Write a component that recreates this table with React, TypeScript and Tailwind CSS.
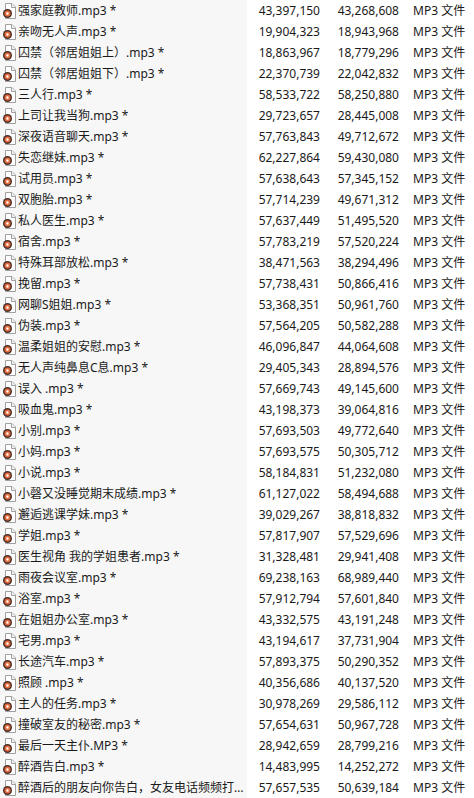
const rows: [string, string, string][] = [
  ['强家庭教师.mp3 *', '43,397,150', '43,268,608'],
  ['亲吻无人声.mp3 *', '19,904,323', '18,943,968'],
  ['囚禁（邻居姐姐上）.mp3 *', '18,863,967', '18,779,296'],
  ['囚禁（邻居姐姐下）.mp3 *', '22,370,739', '22,042,832'],
  ['三人行.mp3 *', '58,533,722', '58,250,880'],
  ['上司让我当狗.mp3 *', '29,723,657', '28,445,008'],
  ['深夜语音聊天.mp3 *', '57,763,843', '49,712,672'],
  ['失恋继妹.mp3 *', '62,227,864', '59,430,080'],
  ['试用员.mp3 *', '57,638,643', '57,345,152'],
  ['双胞胎.mp3 *', '57,714,239', '49,671,312'],
  ['私人医生.mp3 *', '57,637,449', '51,495,520'],
  ['宿舍.mp3 *', '57,783,219', '57,520,224'],
  ['特殊耳部放松.mp3 *', '38,471,563', '38,294,496'],
  ['挽留.mp3 *', '57,738,431', '50,866,416'],
  ['网聊S姐姐.mp3 *', '53,368,351', '50,961,760'],
  ['伪装.mp3 *', '57,564,205', '50,582,288'],
  ['温柔姐姐的安慰.mp3 *', '46,096,847', '44,064,608'],
  ['无人声纯鼻息C息.mp3 *', '29,405,343', '28,894,576'],
  ['误入 .mp3 *', '57,669,743', '49,145,600'],
  ['吸血鬼.mp3 *', '43,198,373', '39,064,816'],
  ['小别.mp3 *', '57,693,503', '49,772,640'],
  ['小妈.mp3 *', '57,693,575', '50,305,712'],
  ['小说.mp3 *', '58,184,831', '51,232,080'],
  ['小磬又没睡觉期末成绩.mp3 *', '61,127,022', '58,494,688'],
  ['邂逅逃课学妹.mp3 *', '39,029,267', '38,818,832'],
  ['学姐.mp3 *', '57,817,907', '57,529,696'],
  ['医生视角 我的学姐患者.mp3 *', '31,328,481', '29,941,408'],
  ['雨夜会议室.mp3 *', '69,238,163', '68,989,440'],
  ['浴室.mp3 *', '57,912,794', '57,601,840'],
  ['在姐姐办公室.mp3 *', '43,332,575', '43,191,248'],
  ['宅男.mp3 *', '43,194,617', '37,731,904'],
  ['长途汽车.mp3 *', '57,893,375', '50,290,352'],
  ['照顾 .mp3 *', '40,356,686', '40,137,520'],
  ['主人的任务.mp3 *', '30,978,269', '29,586,112'],
  ['撞破室友的秘密.mp3 *', '57,654,631', '50,967,728'],
  ['最后一天主仆.MP3 *', '28,942,659', '28,799,216'],
  ['醉酒告白.mp3 *', '14,483,995', '14,252,272'],
  ['醉酒后的朋友向你告白，女友电话频频打来.mp3 *', '57,657,535', '50,639,184'],
]

function AudioFileIcon() {
  return (
    <svg width="16" height="16" viewBox="0 0 16 16" className="shrink-0">
      <path d="M4.5 0.5h6.5l3.5 3.5v11.5h-10z" fill="#fff" stroke="#a0a0a0" />
      <path d="M10.5 0.5v4h4" fill="#f0f0f0" stroke="#a0a0a0" />
      <circle cx="6.5" cy="10.5" r="4.5" fill="#4a2f2a" />
      <circle cx="6.5" cy="10.5" r="3" fill="#e86a3a" />
      <circle cx="6.5" cy="10.5" r="1.2" fill="#fff" />
    </svg>
  )
}

export default function App() {
  return (
    <div
      className="w-[474px] h-[798px] overflow-hidden bg-white text-[12px] text-[#1a1a1a]"
      style={{ fontFamily: '"Noto Sans", "Noto Sans CJK SC", sans-serif' }}
    >
      {rows.map(([name, size, packed]) => (
        <div key={name} className="flex h-[21px] items-center">
          <div className="flex h-full w-[247px] shrink-0 items-center gap-[1px] bg-[#f7f7f7] pl-[1px] pr-[3px]">
            <AudioFileIcon />
            <span className="min-w-0 truncate leading-[21px]">{name}</span>
          </div>
          <div className="w-[79px] shrink-0 pr-[6px] text-right">{size}</div>
          <div className="w-[79px] shrink-0 pr-[6px] text-right">{packed}</div>
          <div className="whitespace-nowrap pl-[8px]">MP3 文件</div>
        </div>
      ))}
    </div>
  )
}
